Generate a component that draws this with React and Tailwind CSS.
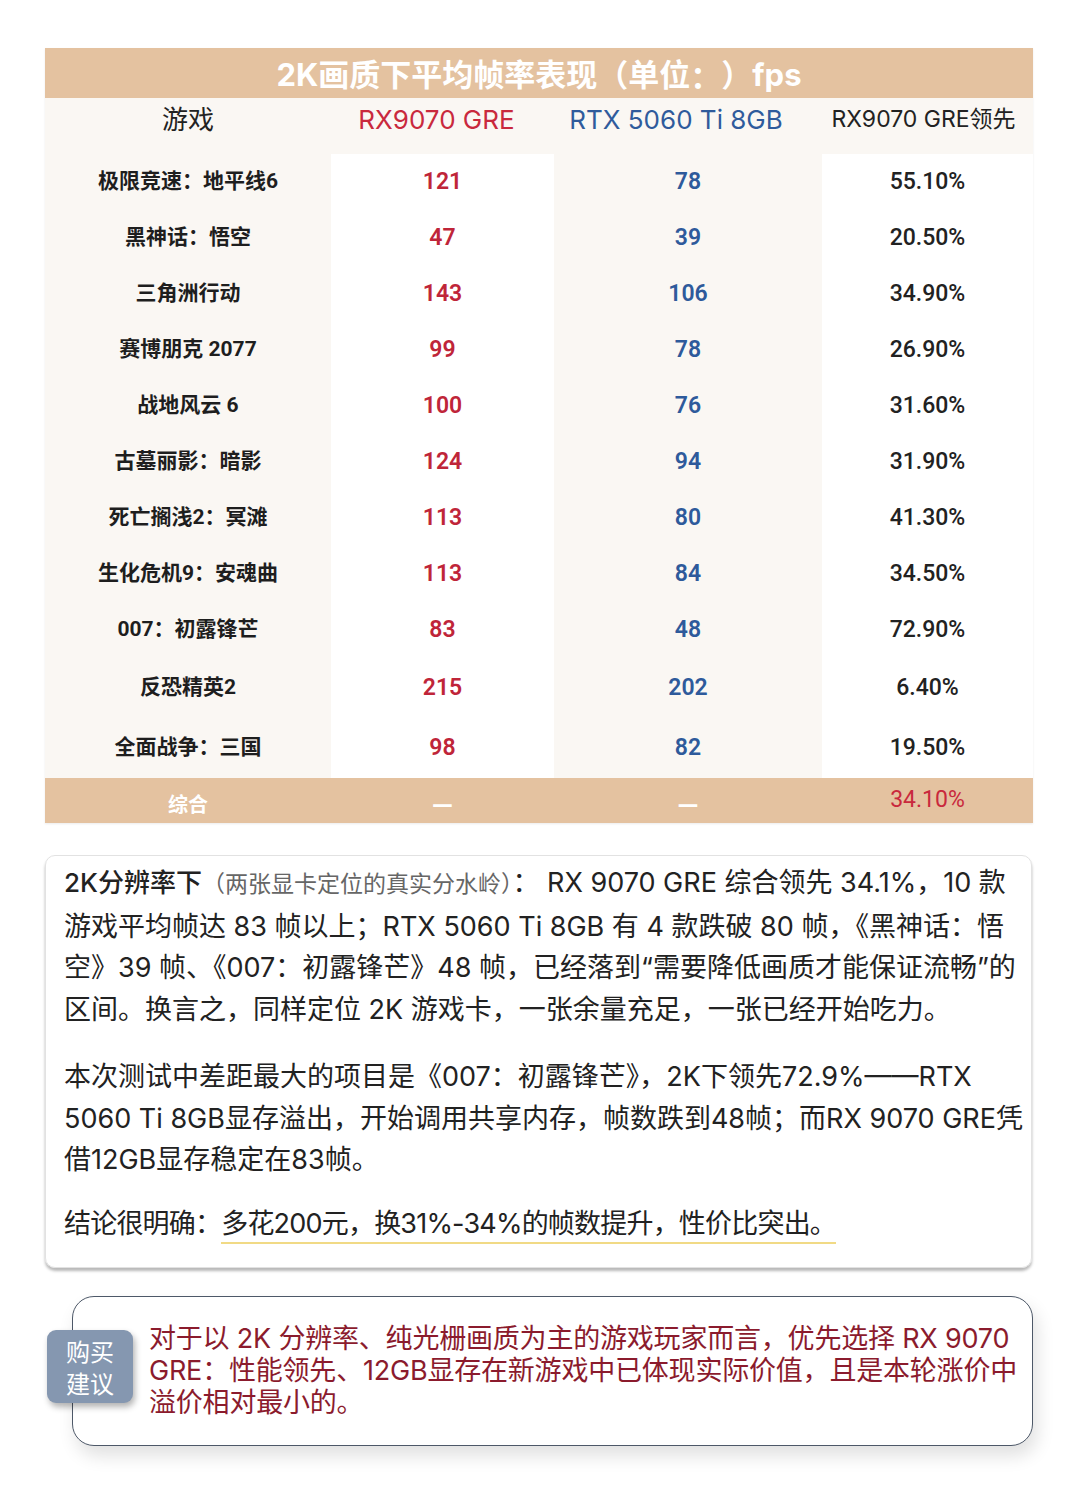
import React from 'react';

const rows = [
  { game: '极限竞速：地平线6', rx: '121', rtx: '78', lead: '55.10%', h: 'h-[56px]' },
  { game: '黑神话：悟空', rx: '47', rtx: '39', lead: '20.50%', h: 'h-[56px]' },
  { game: '三角洲行动', rx: '143', rtx: '106', lead: '34.90%', h: 'h-[56px]' },
  { game: '赛博朋克 2077', rx: '99', rtx: '78', lead: '26.90%', h: 'h-[56px]' },
  { game: '战地风云 6', rx: '100', rtx: '76', lead: '31.60%', h: 'h-[56px]' },
  { game: '古墓丽影：暗影', rx: '124', rtx: '94', lead: '31.90%', h: 'h-[56px]' },
  { game: '死亡搁浅2：冥滩', rx: '113', rtx: '80', lead: '41.30%', h: 'h-[56px]' },
  { game: '生化危机9：安魂曲', rx: '113', rtx: '84', lead: '34.50%', h: 'h-[56px]' },
  { game: '007：初露锋芒', rx: '83', rtx: '48', lead: '72.90%', h: 'h-[56px]' },
  { game: '反恐精英2', rx: '215', rtx: '202', lead: '6.40%', h: 'h-[60px]' },
  { game: '全面战争：三国', rx: '98', rtx: '82', lead: '19.50%', h: 'h-[60px]' },
];

const cols = 'grid grid-cols-[286px_223px_268px_211px]';

export default function App() {
  return (
    <div className="min-h-[1485px] w-[1080px] bg-white pt-[48px] font-['Roboto','Noto_Sans_CJK_SC',sans-serif] text-[#222]">
      {/* Table */}
      <div className="ml-[45px] w-[988px] shadow-[0_1px_2px_rgba(0,0,0,0.08)]">
        <div className="flex h-[50px] items-center justify-center bg-[#e4c2a0] pt-1 font-['Inter','Noto_Sans_CJK_SC',sans-serif] text-[31px] font-bold text-white">
          2K画质下平均帧率表现（单位<span className="font-['Noto_Sans_CJK_SC',sans-serif]">：</span>）fps
        </div>
        <div className={`${cols} h-[56px] items-center bg-[#faf7f3] pb-[13px] text-center font-['Inter','Noto_Sans_CJK_SC',sans-serif]`}>
          <div className="text-[26px]">游戏</div>
          <div className="pr-3 text-[26px] text-[#c9293d]">RX9070 GRE</div>
          <div className="pr-6 text-[26px] text-[#2f5b9c]">RTX 5060 Ti 8GB</div>
          <div className="pr-2 text-[23px]">RX9070 GRE领先</div>
        </div>
        {rows.map((r) => (
          <div key={r.game} className={`${cols} ${r.h} text-center`}>
            <div className="flex items-center justify-center bg-[#faf7f3] text-[21px] font-bold text-[#1e1e1e]">{r.game}</div>
            <div className="flex items-center justify-center bg-white text-[23px] font-semibold text-[#bf2539]">{r.rx}</div>
            <div className="flex items-center justify-center bg-[#faf7f3] text-[23px] font-semibold text-[#2e5a9b]">{r.rtx}</div>
            <div className="flex items-center justify-center bg-white text-[23px] font-medium text-[#222]">{r.lead}</div>
          </div>
        ))}
        <div className={`${cols} h-[45px] items-center bg-[#e4c2a0] text-center`}>
          <div className="pt-[8px] text-[20px] font-bold text-white">综合</div>
          <div className="pt-[6px] font-['Noto_Sans',sans-serif] text-[20px] font-black text-white">—</div>
          <div className="pt-[6px] font-['Noto_Sans',sans-serif] text-[20px] font-black text-white">—</div>
          <div className="text-[23px] text-[#c9293d]">34.10%</div>
        </div>
      </div>

      {/* Analysis text */}
      <div className="ml-[45px] mt-[32px] w-[987px] rounded-[10px] border border-[#e2e2e2] pb-[23px] pl-[18px] pr-[12px] pt-[6px] font-['Inter','Noto_Sans_CJK_SC',sans-serif] text-[27px] leading-[41.5px] text-[#222] shadow-[0_3px_3px_rgba(0,0,0,0.28)]">
        <p className="whitespace-nowrap">
          <span className="text-[26px] font-medium">2K分辨率下</span>
          <span className="text-[23px] text-[#666]">（两张显卡定位的真实分水岭）</span>： RX 9070 GRE 综合领先 34.1%，10 款
          <br />
          游戏平均帧达 83 帧以上；RTX 5060 Ti 8GB 有 4 款跌破 80 帧，《黑神话：悟
          <br />
          空》39 帧、《007：初露锋芒》48 帧，已经落到“需要降低画质才能保证流畅”的
          <br />
          区间。换言之，同样定位 2K 游戏卡，一张余量充足，一张已经开始吃力。
        </p>
        <p className="mt-[26px] whitespace-nowrap">
          本次测试中差距最大的项目是《007：初露锋芒》，2K下领先72.9%——RTX
          <br />
          5060 Ti 8GB显存溢出，开始调用共享内存，帧数跌到48帧；而RX 9070 GRE凭
          <br />
          借12GB显存稳定在83帧。
        </p>
        <p className="mt-[22px] whitespace-nowrap tracking-[-0.8px]">
          结论很明确：
          <span className="border-b-2 border-[#f1da85] pb-[2px]">多花200元，换31%-34%的帧数提升，性价比突出。</span>
        </p>
      </div>

      {/* Buying advice */}
      <div className="relative ml-[72px] mt-[28px] w-[961px] rounded-[22px] border-[1.5px] border-[#4d5868] bg-white pb-[26px] pl-[76px] pr-[12px] pt-[26px] font-['Inter','Noto_Sans_CJK_SC',sans-serif] shadow-[4px_10px_18px_rgba(0,0,0,0.12)]">
        <div className="absolute left-[-26px] top-[33px] flex h-[73px] w-[86px] flex-col items-center justify-center gap-[2px] rounded-[9px] bg-[#8597b0] font-['Noto_Sans_CJK_SC',sans-serif] text-[24px] leading-[30px] text-white shadow-[2px_4px_6px_rgba(0,0,0,0.3)]">
          <span>购买</span>
          <span>建议</span>
        </div>
        <p className="whitespace-nowrap text-[27px] leading-[32px] tracking-[-0.2px] text-[#8b1b2d]">
          对于以 2K 分辨率、纯光栅画质为主的游戏玩家而言，优先选择 RX 9070
          <br />
          GRE：性能领先、12GB显存在新游戏中已体现实际价值，且是本轮涨价中
          <br />
          溢价相对最小的。
        </p>
      </div>
    </div>
  );
}
